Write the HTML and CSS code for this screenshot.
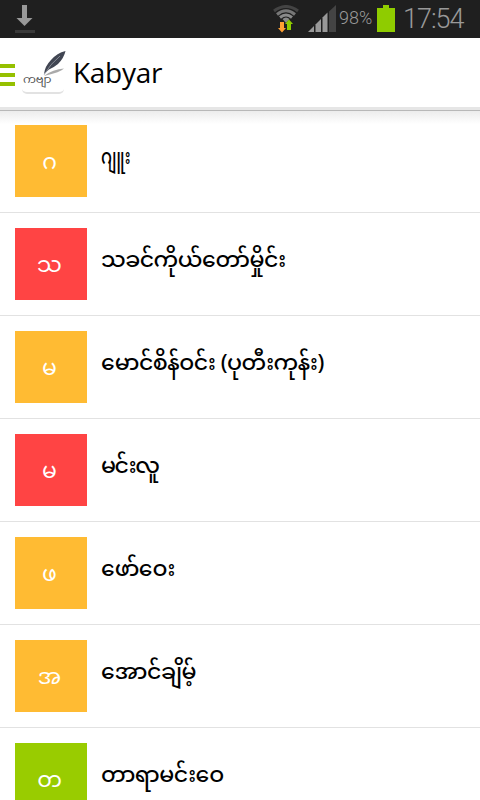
FILE: index.html
```html
<!DOCTYPE html>
<html lang="my">
<head>
  <meta charset="UTF-8">
  <title>Kabyar</title>
  <link rel="stylesheet" href="styles.css">
</head>
<body>

  <div class="status-bar">
    <svg class="download" width="20" height="28" viewBox="0 0 20 28">
      <path d="M7 0h5v13h5.500L9.500 21 1.500 13H7z" fill="#999"/>
      <path d="M0 25h20v3H0z" fill="#3a3a3a"/>
    </svg>
    <svg class="wifi" width="26" height="28" viewBox="0 0 26 28">
      <g fill="none" stroke-width="3">
        <path d="M1 6Q13-3 25 6" stroke="#444"/>
        <path d="M4 9.500Q13 2 22 9.500" stroke="#777"/>
        <path d="M7 12.500Q13 7.500 19 12.500" stroke="#8a8a8a"/>
      </g>
      <path d="M9.500 14Q13 11 16.500 14L13 18z" fill="#8a8a8a"/>
      <path d="M7 17h4v6h2l-4 4.500L5 23h2z" fill="#ffa033"/>
      <path d="M14 25v-6h-2l4-4.500 4 4.500h-2v6z" fill="#8fcc00"/>
    </svg>
    <svg class="signal" width="28" height="27" viewBox="0 0 28 27">
      <path d="M0 27l6-6v6z" fill="#999"/>
      <path d="M7.500 27v-7.500l5.500-5.500v13z" fill="#999"/>
      <path d="M14.500 27V12.500l5-5V27z" fill="#999"/>
      <path d="M21 27V6.500L28 0v27z" fill="#444"/>
    </svg>
    <span class="percent">98%</span>
    <svg class="battery" width="18" height="27" viewBox="0 0 18 27">
      <path d="M6 0h6v3h6v24H0V3h6z" fill="#8fcc00"/>
    </svg>
    <span class="clock">17:54</span>
  </div>

  <header class="action-bar">
    <div class="menu"><i></i><i></i><i></i></div>
    <div class="logo">
      <span class="logo-text">ကဗျာ</span>
      <svg class="feather" width="24" height="28" viewBox="0 0 24 28">
        <path d="M1 25Q10 18 21 17.500 18 21 1 25z" fill="#aaa"/>
        <path d="M1 23Q2 15 8 9 14 2 22.500 0 21 7 15 13 10 17 6 18.500z" fill="#414653"/>
        <path d="M1 24Q7 13 17 5" fill="none" stroke="#a4a8b0" stroke-width=".7"/>
      </svg>
    </div>
    <h1>Kabyar</h1>
  </header>

  <ul class="authors">
    <li><div class="tile orange">ဂ</div><span class="name narrow">ဂျူး</span></li>
    <li><div class="tile red">သ</div><span class="name">သခင်ကိုယ်တော်မှိုင်း</span></li>
    <li><div class="tile orange">မ</div><span class="name">မောင်စိန်ဝင်း (ပုတီးကုန်း)</span></li>
    <li><div class="tile red">မ</div><span class="name short">မင်းလူ</span></li>
    <li><div class="tile orange">ဖ</div><span class="name">ဖော်ဝေး</span></li>
    <li><div class="tile orange">အ</div><span class="name">အောင်ချိမ့်</span></li>
    <li><div class="tile green">တ</div><span class="name">တာရာမင်းဝေ</span></li>
  </ul>

</body>
</html>
```
FILE: styles.css
```css
* {
  box-sizing: border-box;
}

body {
  margin: 0;
  height: 800px;
  overflow: hidden;
  background: #fff;
  color: #000;
  font-family: "Noto Sans Myanmar", "Noto Sans", sans-serif;
}

svg {
  display: block;
  flex: none;
}

.status-bar {
  display: flex;
  align-items: flex-start;
  height: 38px;
  padding: 5px 0 0 15px;
  background: #1f1f1f;
  color: #999;
  font-family: Roboto, sans-serif;
  font-weight: 300;
}

.wifi {
  margin-left: 238px;
}

.signal {
  margin-left: 9px;
}

.percent {
  width: 35px;
  margin-left: 3px;
  font-size: 18px;
  line-height: 26px;
}

.battery {
  margin-left: 3px;
}

.clock {
  margin-left: 8px;
  font-size: 27px;
  letter-spacing: -1px;
  line-height: 28px;
  white-space: nowrap;
}

.action-bar {
  display: flex;
  align-items: flex-start;
  height: 72px;
  border-bottom: 3px solid #e6e6e6;
}

.menu {
  display: flex;
  flex-direction: column;
  gap: 5px;
  width: 15px;
  margin-top: 26px;
}

.menu i {
  height: 4px;
  background: #95c000;
}

.logo {
  position: relative;
  width: 42px;
  height: 42px;
  margin: 14px 0 0 7px;
  border-bottom: 2px solid #e2e2e2;
  border-radius: 5px;
}

.logo-text {
  position: absolute;
  left: 1px;
  top: 17px;
  color: #555;
  font-size: 11.5px;
  letter-spacing: -.3px;
  line-height: 24px;
}

.feather {
  position: absolute;
  left: 21px;
  top: -1px;
}

h1 {
  margin: 13px 0 0 9px;
  font-family: "Open Sans", sans-serif;
  font-size: 28px;
  font-weight: 400;
  letter-spacing: -.3px;
  line-height: 42px;
}

.authors {
  margin: 0;
  padding: 0;
  list-style: none;
  background: linear-gradient(#b8b8b8 1px, #ececec 1px, #fff 14px) no-repeat;
  background-size: 100% 14px;
}

.authors li {
  display: flex;
  height: 103px;
  padding: 15px;
  border-bottom: 1px solid #e2e2e2;
}

.tile {
  width: 72px;
  height: 72px;
  padding: 26px 3px 0 0;
  color: #fff;
  font-size: 22px;
  line-height: 26px;
  text-align: center;
}

.orange {
  background: #fb3;
}

.red {
  background: #f44;
}

.green {
  background: #9c0;
}

.name {
  margin-left: 14px;
  font-size: 22px;
  font-weight: 500;
  letter-spacing: -.5px;
  line-height: 68px;
  white-space: nowrap;
}

.short {
  letter-spacing: -1.500px;
}

.narrow {
  letter-spacing: 0;
  transform: scaleX(.74);
  transform-origin: left;
}
```
